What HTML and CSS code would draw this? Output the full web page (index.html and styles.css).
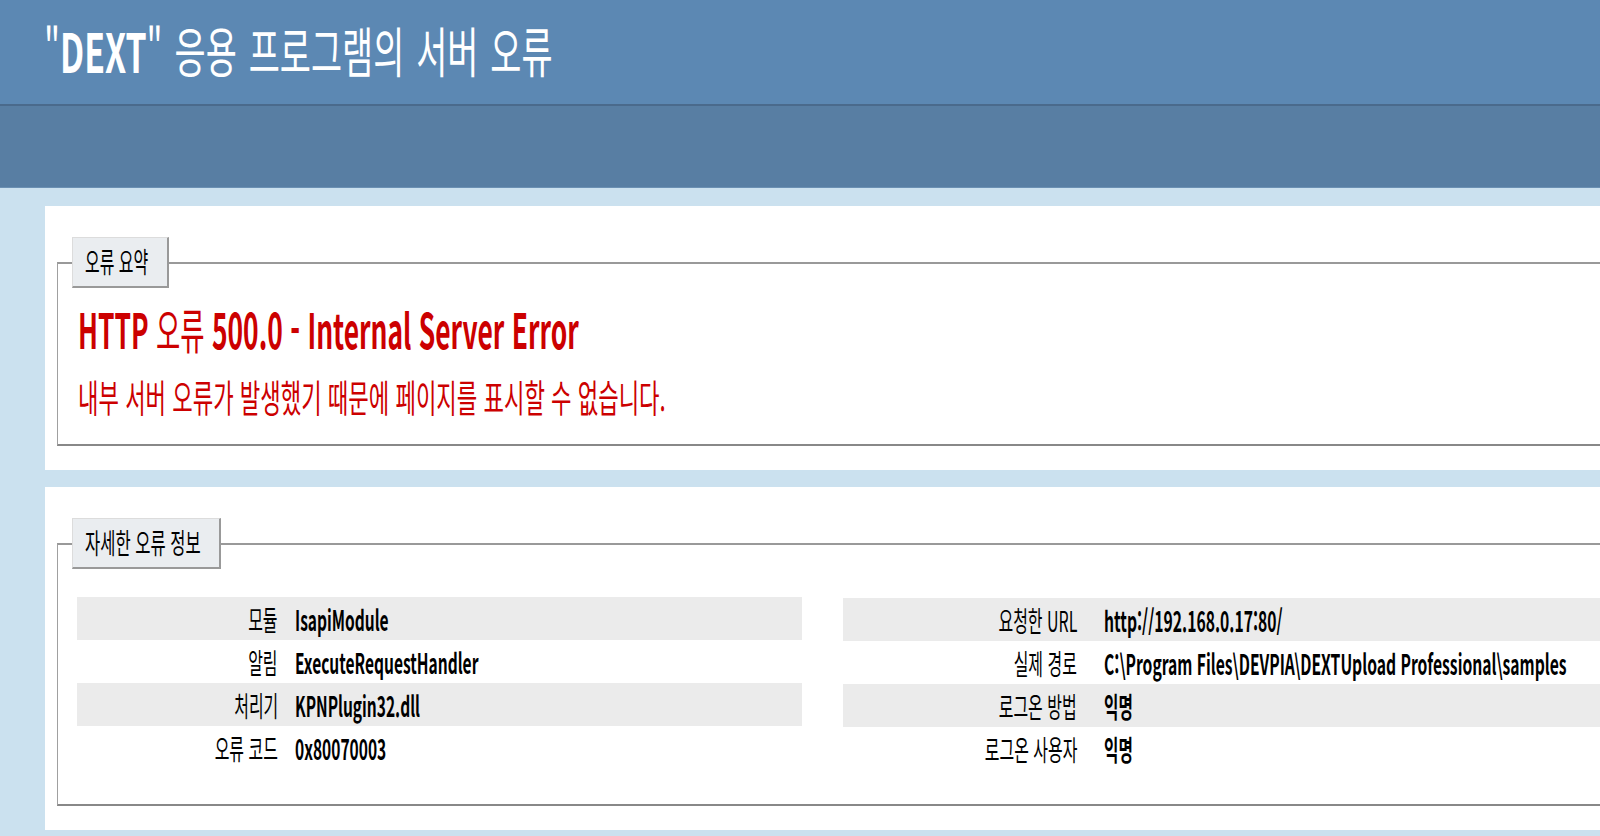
FILE: index.html
```html
<!DOCTYPE html>
<html lang="ko">
<head>
  <meta charset="UTF-8" />
  <title>IIS 8.5 상세 오류 - 500.0 - Internal Server Error</title>
  <link rel="stylesheet" href="styles.css">
</head>
<body>
  <div id="header">
    <h1><span class="sq">"<b>DEXT</b>" 응용 프로그램의 서버 오류</span></h1>
  </div>
  <div id="subbar"></div>

  <div id="content">
    <div class="content-container">
      <fieldset>
        <legend><span class="sq">오류 요약</span></legend>
        <h2><span class="sq">HTTP <span class="plain">오류</span> 500.0 - Internal Server Error</span></h2>
        <h3><span class="sq">내부 서버 오류가 발생했기 때문에 페이지를 표시할 수 없습니다.</span></h3>
      </fieldset>
    </div>

    <div class="content-container">
      <fieldset>
        <legend class="wide"><span class="sq">자세한 오류 정보</span></legend>
        <div class="details">
          <div id="details-left">
            <table>
              <tr class="alt"><th><span class="sq sq-r">모듈</span></th><td><span class="sq">IsapiModule</span></td></tr>
              <tr><th><span class="sq sq-r">알림</span></th><td><span class="sq">ExecuteRequestHandler</span></td></tr>
              <tr class="alt"><th><span class="sq sq-r">처리기</span></th><td><span class="sq">KPNPlugin32.dll</span></td></tr>
              <tr><th><span class="sq sq-r">오류 코드</span></th><td><span class="sq">0x80070003</span></td></tr>
            </table>
          </div>
          <div id="details-right">
            <table>
              <tr class="alt"><th><span class="sq sq-r">요청한 URL</span></th><td><span class="sq">http://192.168.0.17:80/</span></td></tr>
              <tr><th><span class="sq sq-r">실제 경로</span></th><td><span class="sq">C:\Program Files\DEVPIA\DEXTUpload Professional\samples</span></td></tr>
              <tr class="alt"><th><span class="sq sq-r">로그온 방법</span></th><td><span class="sq">익명</span></td></tr>
              <tr><th><span class="sq sq-r">로그온 사용자</span></th><td><span class="sq">익명</span></td></tr>
            </table>
          </div>
        </div>
      </fieldset>
    </div>
  </div>
</body>
</html>
```

FILE: styles.css
```css
html, body {
  margin: 0;
  overflow: hidden;
}
body {
  background-color: #cbe1ef;
  font-family: "Noto Sans CJK KR", "Noto Sans", sans-serif;
  color: #000;
}

/* the screenshot is squeezed sideways, so every text run is too */
.sq {
  display: inline-block;
  white-space: nowrap;
  transform: scaleX(0.57);
  transform-origin: left center;
}
.sq-r {
  transform-origin: right center;
}

#header {
  background-color: #5c88b3;
  height: 106px;
  box-sizing: border-box;
  border-bottom: 2px solid #4a6a8c;
  padding: 20px 0 0 44px;
}
#header h1 {
  margin: 0;
  font-size: 54px;
  font-weight: normal;
  line-height: 60px;
  color: #fff;
}
#header h1 .sq {
  transform: scaleX(0.626);
  word-spacing: 4px;
}
#subbar {
  background-color: #587ea3;
  height: 81px;
  border-bottom: 1px solid #6b90b3;
}

#content {
  padding-top: 18px;
}
.content-container {
  background-color: #fff;
  margin: 0 -120px 17px 45px;
  padding: 31px 0 24px 12px;
}

fieldset {
  margin: 0;
  padding: 0 0 26px 14px;
  border: 1px solid #a0a0a0;
  border-top: 2px solid #999;
  border-bottom: 2px solid #888;
}
legend {
  width: 97px;
  height: 51px;
  box-sizing: border-box;
  padding: 0 0 0 12px;
  background-color: #eaedf0;
  border-top: 1px solid #dcdcdc;
  border-left: 1px solid #dcdcdc;
  border-right: 2px solid #999;
  border-bottom: 2px solid #999;
  font-size: 28px;
  line-height: 46px;
  overflow: visible;
}
legend.wide {
  width: 149px;
}
legend.wide .sq {
  transform: scaleX(0.59);
}

h2 {
  margin: 12px 0 0 6px;
  font-size: 48px;
  line-height: 56px;
  font-weight: bold;
  color: #cc0000;
}
h2 .sq {
  transform: scaleX(0.55);
}
h2 .plain {
  font-weight: normal;
}
h3 {
  margin: 18px 0 0 6px;
  font-size: 38px;
  line-height: 44px;
  font-weight: normal;
  color: #cc0000;
}
h3 .sq {
  transform: scaleX(0.585);
}

.details {
  display: flex;
  gap: 41px;
  margin: 28px 0 8px 5px;
}
#details-left {
  width: 725px;
  flex: none;
}
#details-right {
  flex: 1;
  padding-top: 1px;
}
table {
  width: 100%;
  border-collapse: collapse;
  table-layout: fixed;
}
th, td {
  height: 43px;
  padding: 0;
  font-size: 28px;
  white-space: nowrap;
  overflow: visible;
}
th {
  width: 201px;
  padding-right: 5px;
  text-align: right;
  font-weight: normal;
}
td {
  padding-left: 12px;
  font-weight: bold;
}
td .sq {
  transform: scaleX(0.555);
}
#details-right th {
  width: 234px;
}
#details-right td {
  padding-left: 22px;
}
#details-right td .sq {
  transform: scaleX(0.56);
}
tr.alt {
  background-color: #ebebeb;
}
```
